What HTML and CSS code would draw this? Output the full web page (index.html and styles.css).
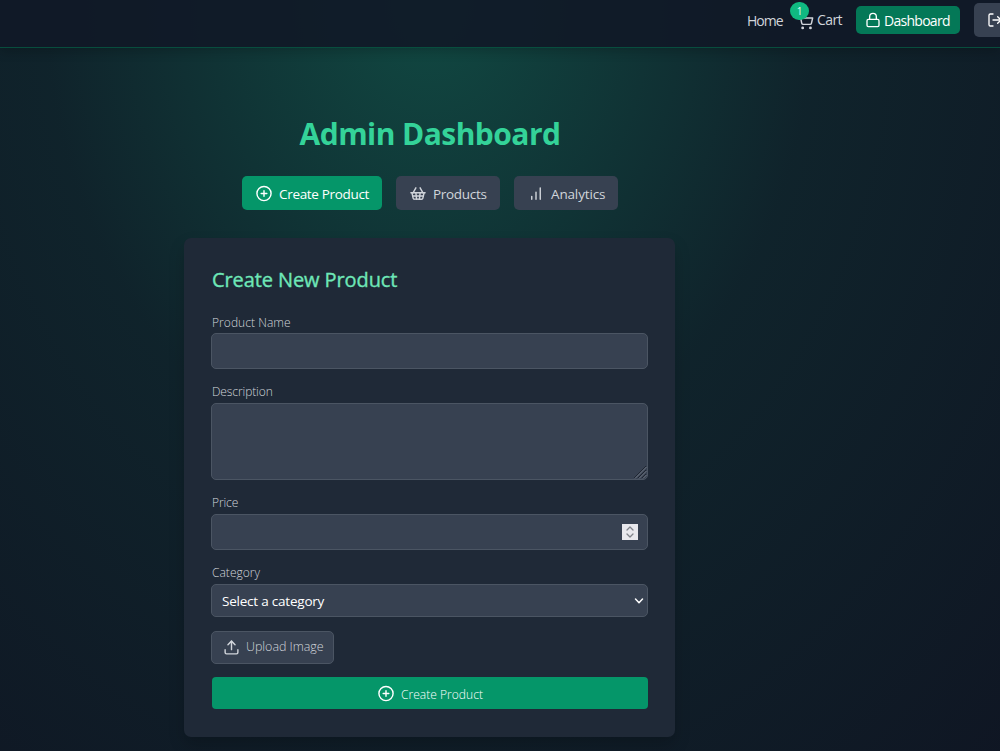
FILE: index.html
```html
<!DOCTYPE html>
<html lang="en">
<head>
<meta charset="utf-8">
<title>Admin Dashboard</title>
<link rel="stylesheet" href="styles.css">
</head>
<body>
<header class="header">
  <nav class="nav">
    <a class="nav-link nav-home"><span class="t-home">Home</span></a>
    <a class="nav-link nav-cart">
      <svg class="icon cart-icon" viewBox="0 0 24 24"><circle cx="8" cy="21" r="1"/><circle cx="19" cy="21" r="1"/><path d="M2.05 2.05h2l2.66 12.42a2 2 0 0 0 2 1.58h9.78a2 2 0 0 0 1.95-1.57l1.65-7.43H5.12"/></svg>
      <span class="t-cart">Cart</span>
      <span class="badge">1</span>
    </a>
    <a class="nav-dashboard">
      <svg class="icon lock-icon" viewBox="0 0 24 24"><rect width="18" height="11" x="3" y="11" rx="2"/><path d="M7 11V7a5 5 0 0 1 10 0v4"/></svg>
      <span class="t-dash">Dashboard</span>
    </a>
    <button class="nav-logout">
      <svg class="icon logout-icon" viewBox="0 0 19.500 24"><path d="M9 21H5a2 2 0 0 1-2-2V5a2 2 0 0 1 2-2h4"/><path d="m16 17 5-5-5-5"/><path d="M21 12H9"/></svg>
    </button>
  </nav>
</header>
<main class="main">
  <h1 class="title"><span>Admin Dashboard</span></h1>
  <div class="tabs">
    <button class="tab tab-create active">
      <svg class="icon tab-icon" viewBox="0 0 24 24"><circle cx="12" cy="12" r="10"/><path d="M8 12h8M12 8v8"/></svg>
      <span class="t-create">Create Product</span>
    </button>
    <button class="tab tab-products">
      <svg class="icon tab-icon" viewBox="0 0 24 24"><path d="m15 11-1 9"/><path d="m19 11-4-7"/><path d="M2 11h20"/><path d="m3.5 11 1.6 7.4a2 2 0 0 0 2 1.6h9.8a2 2 0 0 0 2-1.6l1.7-7.4"/><path d="M4.5 15.5h15"/><path d="m5 11 4-7"/><path d="m9 11 1 9"/></svg>
      <span class="t-products">Products</span>
    </button>
    <button class="tab tab-analytics">
      <svg class="icon tab-icon" viewBox="0 0 24 24"><path d="M12 20V10M18 20V4M6 20v-4"/></svg>
      <span class="t-analytics">Analytics</span>
    </button>
  </div>
  <section class="card">
    <h2 class="card-title"><span>Create New Product</span></h2>
    <form class="form">
      <div class="field">
        <label class="label t-name">Product Name</label>
        <input class="control" type="text">
      </div>
      <div class="field">
        <label class="label t-desc">Description</label>
        <div class="area-wrap">
          <textarea class="control area"></textarea>
          <svg class="grip" viewBox="0 0 14 14"><path class="grip-dark" d="M1 13 13 1M5 13l8-8M9 13l4-4"/><path class="grip-light" d="M2 13.500 13.500 2M6 13.500 13.500 6M10 13.500l3.500-3.500"/></svg>
        </div>
      </div>
      <div class="field">
        <label class="label t-price">Price</label>
        <div class="control number">
          <span class="spinner"><svg class="icon" viewBox="0 0 16 16"><path d="m5 6 3-3 3 3M5 10l3 3 3-3"/></svg></span>
        </div>
      </div>
      <div class="field field-last">
        <label class="label t-category">Category</label>
        <div class="control select">
          <span class="t-select">Select a category</span>
          <svg class="icon chevron" viewBox="0 0 10 10"><path d="m1.5 3 3.5 3.7L8.500 3"/></svg>
        </div>
      </div>
      <button type="button" class="upload">
        <svg class="icon upload-icon" viewBox="0 0 24 24"><path d="M21 15v4a2 2 0 0 1-2 2H5a2 2 0 0 1-2-2v-4"/><path d="m17 8-5-5-5 5"/><path d="M12 3v12"/></svg>
        <span class="t-upload">Upload Image</span>
      </button>
      <button type="button" class="submit">
        <svg class="icon tab-icon" viewBox="0 0 24 24"><circle cx="12" cy="12" r="10"/><path d="M8 12h8M12 8v8"/></svg>
        <span class="t-submit">Create Product</span>
      </button>
    </form>
  </section>
</main>
</body>
</html>
```
FILE: styles.css
```css
* { box-sizing: border-box; }
body {
  margin: 0;
  width: 1000px;
  height: 751px;
  overflow: hidden;
  color: #fff;
  font-family: "Open Sans", "Noto Sans", sans-serif;
  background:
    radial-gradient(ellipse 850px 1065px at 430px 0, rgba(16,185,129,.3) 0%, rgba(10,80,60,.2) 45%, rgba(0,0,0,.1) 100%),
    #111827;
}
button { margin: 0; border: 0; font: inherit; color: inherit; padding: 0; }
span, label { white-space: nowrap; }
.icon {
  display: block;
  flex: none;
  fill: none;
  stroke: currentColor;
  stroke-width: 2;
  stroke-linecap: round;
  stroke-linejoin: round;
}
.header {
  height: 48px;
  background: rgba(17,24,39,.9);
  border-bottom: 1px solid rgba(6,95,70,.75);
  box-shadow: 0 4px 10px rgba(0,0,0,.18);
}
.nav {
  display: flex;
  align-items: center;
  height: 40px;
  padding-left: 747px;
  color: #d1d5db;
  font-size: 14px;
}
.nav > * { flex: none; }
.nav-home { width: 50px; }
.nav-cart {
  position: relative;
  display: flex;
  align-items: center;
  gap: 3px;
  width: 59px;
}
.cart-icon { width: 17px; height: 17px; margin-top: 3px; }
.badge {
  position: absolute;
  left: -7px;
  top: -8px;
  width: 19px;
  height: 18px;
  border-radius: 9px;
  background: #10b981;
  color: #e5f9f1;
  font-size: 10px;
  line-height: 18px;
  text-align: center;
}
.nav-dashboard {
  display: flex;
  align-items: center;
  gap: 3px;
  width: 104px;
  height: 28px;
  padding-left: 9px;
  border-radius: 5px;
  background: #047857;
  color: #fff;
}
.lock-icon { width: 16px; height: 16px; }
.nav-logout {
  display: flex;
  align-items: center;
  width: 26px;
  height: 34px;
  margin-left: 14px;
  padding-left: 13px;
  border-radius: 5px 0 0 5px;
  background: #374151;
  color: #fff;
}
.logout-icon { width: 13px; height: 16px; }
.main { width: 860px; padding-top: 66px; }
.title {
  margin: 0;
  height: 42px;
  line-height: 40px;
  text-align: center;
  font-size: 30px;
  letter-spacing: -.55px;
  font-weight: 700;
  color: #34d399;
}
.tabs {
  display: flex;
  justify-content: center;
  gap: 14px;
  margin-top: 20px;
}
.tab {
  display: flex;
  align-items: center;
  gap: 6px;
  height: 34px;
  padding: 1px 0 0 13px;
  border-radius: 5px;
  background: #374151;
  color: #d1d5db;
  font-size: 13.5px;
}
.tab.active { background: #059669; color: #fff; }
.tab-create { width: 140px; }
.tab-products { width: 104px; }
.tab-analytics { width: 104px; }
.tab-icon { width: 18px; height: 17px; }
.t-home { letter-spacing: -.95px; }
.t-cart { letter-spacing: -.6px; padding-bottom: 1px; }
.t-dash { letter-spacing: -.72px; }
.t-create { letter-spacing: -.32px; }
.t-products { letter-spacing: -.3px; }
.t-analytics { letter-spacing: -.15px; }
.card {
  width: 491px;
  height: 499px;
  margin: 28px 0 0 184px;
  padding: 28px 27px;
  border-radius: 7px;
  background: #1f2937;
  box-shadow: 0 8px 16px rgba(0,0,0,.18);
}
.card-title {
  margin: 0 0 20px;
  height: 28px;
  padding-left: 1px;
  line-height: 28px;
  font-size: 20px;
  letter-spacing: -.1px;
  font-weight: 400;
  -webkit-text-stroke: .35px currentColor;
  color: #6ee7b7;
}
.form { display: flex; flex-direction: column; align-items: flex-start; }
.field {
  display: flex;
  flex-direction: column;
  align-items: flex-start;
  width: 100%;
  margin-bottom: 15px;
}
.field-last { margin-bottom: 14px; }
.label {
  height: 19px;
  line-height: 15px;
  margin-left: 1px;
  font-size: 12px;
  letter-spacing: -.1px;
  font-weight: 300;
  color: #d1d5db;
}
.t-name { line-height: 17px; letter-spacing: .05px; }
.t-category { letter-spacing: .02px; }
.control {
  display: block;
  width: 437px;
  height: 36px;
  margin: 0;
  border: 1px solid #4b5563;
  border-radius: 5px;
  background: #374151;
  color: #fff;
}
.area-wrap { position: relative; }
.area { height: 77px; resize: none; }
.grip { position: absolute; right: 1px; bottom: 1px; width: 14px; height: 14px; fill: none; }
.grip-dark { stroke: #1f2632; stroke-width: 1; }
.grip-light { stroke: #8b919b; stroke-width: .7; }
.number { display: flex; align-items: center; justify-content: flex-end; padding-right: 9px; }
.spinner { width: 16px; height: 16px; background: #e8e8ed; color: #80838a; }
.spinner .icon { stroke-width: 1.3; }
.select {
  display: flex;
  align-items: center;
  justify-content: space-between;
  height: 33px;
  padding: 0 3px 0 10px;
  font-size: 13.5px;
  letter-spacing: -.22px;
}
.chevron { width: 10px; height: 10px; stroke-width: 1.5; }
.upload {
  display: flex;
  align-items: center;
  gap: 6px;
  width: 123px;
  height: 33px;
  margin-bottom: 13px;
  padding-left: 11px;
  border: 1px solid #4b5563;
  border-radius: 5px;
  background: #374151;
  color: #d1d5db;
  font-size: 12.5px;
  font-weight: 300;
}
.upload-icon { width: 17px; height: 17px; }
.t-upload { padding-bottom: 3px; letter-spacing: -.05px; }
.submit {
  display: flex;
  align-items: center;
  justify-content: center;
  gap: 6px;
  width: 436px;
  height: 32px;
  margin-left: 1px;
  border-radius: 4px;
  background: #059669;
  font-size: 12px;
  font-weight: 300;
}
.t-submit { padding-top: 2px; letter-spacing: .03px; }
```
